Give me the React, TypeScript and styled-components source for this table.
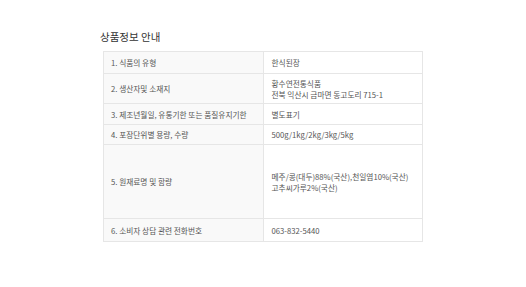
import React from "react";
import styled, { createGlobalStyle } from "styled-components";

const GlobalStyle = createGlobalStyle`
	html, body {
		margin: 0;
		padding: 0;
		background: #ffffff;
	}
	body {
		font-family: "Noto Sans CJK KR", "Noto Sans", sans-serif;
	}
`;

interface Row {
	label: string;
	value: string[];
	height: number;
}

const rows: Row[] = [
	{ label: "1. 식품의 유형", value: ["한식된장"], height: 22 },
	{
		label: "2. 생산자및 소재지",
		value: ["황수연전통식품", "전북 익산시 금마면 동고도리 715-1"],
		height: 30,
	},
	{
		label: "3. 제조년월일, 유통기한 또는 품질유지기한",
		value: ["별도표기"],
		height: 21,
	},
	{ label: "4. 포장단위별 용량, 수량", value: ["500g/1kg/2kg/3kg/5kg"], height: 20 },
	{
		label: "5. 원재료명 및 함량",
		value: ["메주/콩(대두)88%(국산),천일염10%(국산)", "고추씨가루2%(국산)"],
		height: 74,
	},
	{ label: "6. 소비자 상담 관련 전화번호", value: ["063-832-5440"], height: 23 },
];

const App: React.FC = () => {
	return (
		<Page>
			<GlobalStyle />
			<Title>상품정보 안내</Title>
			<Table>
				<tbody>
					{rows.map((row) => (
						<tr key={row.label}>
							<Label h={row.height}>{row.label}</Label>
							<Value h={row.height}>
								{row.value.map((line) => (
									<Line key={line}>{line}</Line>
								))}
							</Value>
						</tr>
					))}
				</tbody>
			</Table>
		</Page>
	);
};

export default App;

const Page = styled.div`
	width: 526px;
	height: 287px;
	padding: 30px 0 0 103px;
	box-sizing: border-box;
`;
const Title = styled.h2`
	margin: 0 0 8px -3px;
	font-size: 10.5px;
	font-weight: 400;
	line-height: 13px;
	color: #333;
`;
const Table = styled.table`
	width: 320px;
	border-collapse: collapse;
	table-layout: fixed;
	border: 1px solid #e6e6e6;
	font-size: 7.7px;
	color: #555;
`;
const Label = styled.th<{ h: number }>`
	width: 50%;
	height: ${(p) => p.h}px;
	padding: 0 0 0 7px;
	box-sizing: border-box;
	background: #f9f9f9;
	border: 1px solid #e6e6e6;
	text-align: left;
	font-weight: 400;
	vertical-align: middle;
`;
const Value = styled.td<{ h: number }>`
	height: ${(p) => p.h}px;
	padding: 0 0 0 8px;
	box-sizing: border-box;
	background: #fff;
	border: 1px solid #e6e6e6;
	vertical-align: middle;
`;
const Line = styled.div`
	line-height: 11px;
`;
